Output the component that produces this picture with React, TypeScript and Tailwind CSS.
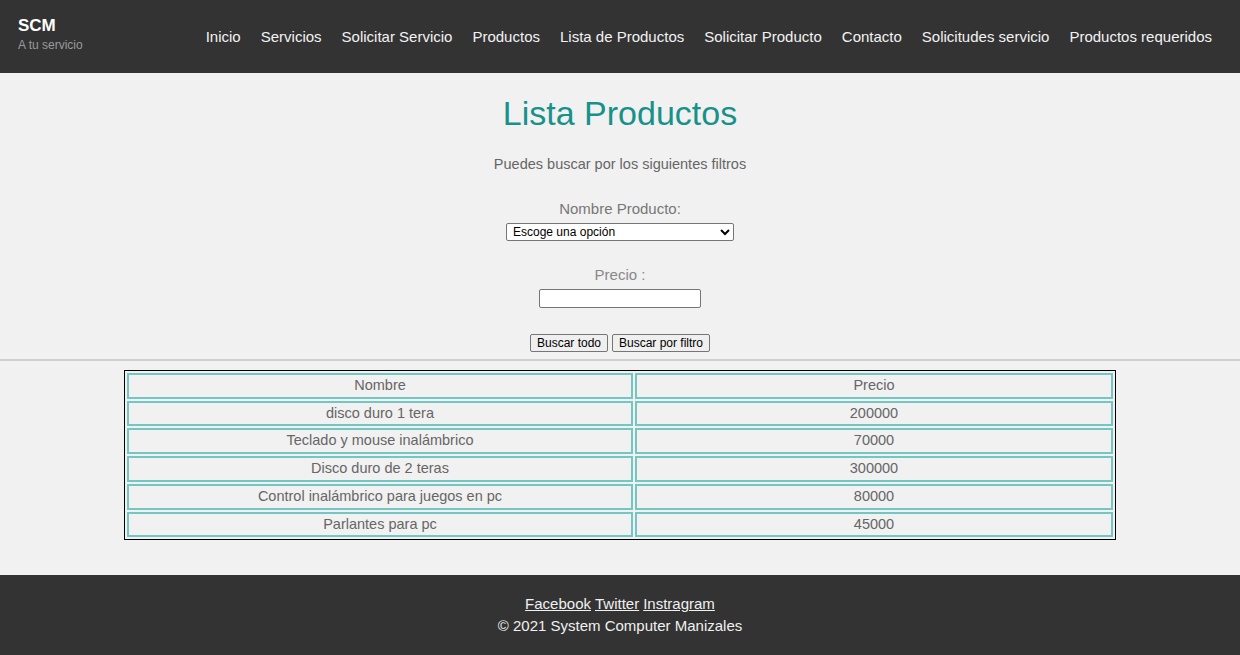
import React from 'react'

const navItems = [
  'Inicio',
  'Servicios',
  'Solicitar Servicio',
  'Productos',
  'Lista de Productos',
  'Solicitar Producto',
  'Contacto',
  'Solicitudes servicio',
  'Productos requeridos',
]

const productos = [
  { nombre: 'disco duro 1 tera', precio: '200000' },
  { nombre: 'Teclado y mouse inalámbrico', precio: '70000' },
  { nombre: 'Disco duro de 2 teras', precio: '300000' },
  { nombre: 'Control inalámbrico para juegos en pc', precio: '80000' },
  { nombre: 'Parlantes para pc', precio: '45000' },
]

function Header() {
  return (
    <header className="flex h-[73px] items-center justify-between bg-[#333333] pl-[18px] pr-[28px]">
      {/* Logo */}
      <div className="flex flex-col pb-[4px]">
        <span className="text-[17px] font-bold leading-[20px] text-white">SCM</span>
        <span className="text-[12px] leading-[18px] text-[#9a9a9a]">A tu servicio</span>
      </div>

      {/* Navigation */}
      <nav className="flex items-center gap-[20px] pt-[2px]">
        {navItems.map((item, index) => (
          <a key={index} href="#" className="text-[15px] text-[#f2f2f2]">
            {item}
          </a>
        ))}
      </nav>
    </header>
  )
}

function Filtros() {
  return (
    <section className="flex flex-col items-center">
      <h1 className="mt-[20px] text-[34px] leading-[40px] text-[#17918a]">Lista Productos</h1>
      <p className="mt-[21px] text-[14.5px] text-[#666666]">Puedes buscar por los siguientes filtros</p>

      <label className="mt-[24px] text-[15px] leading-[18px] text-[#777777]">Nombre Producto:</label>
      <select className="mt-[5px] h-[18px] w-[228px] rounded-[2px] border border-[#767676] bg-white px-[2px] text-[12px] leading-[14px] text-black">
        <option>Escoge una opción</option>
      </select>

      <label className="mt-[25px] text-[15px] leading-[18px] text-[#888888]">Precio :</label>
      <input
        type="text"
        className="mt-[5px] h-[19px] w-[162px] rounded-[2px] border border-[#767676] bg-white"
      />

      <div className="mt-[26px] flex gap-[4px]">
        <button className="h-[18px] rounded-[2px] border border-[#767676] bg-[#efefef] px-[6px] text-[12px] leading-[14px] text-black">
          Buscar todo
        </button>
        <button className="h-[18px] rounded-[2px] border border-[#767676] bg-[#efefef] px-[6px] text-[12px] leading-[14px] text-black">
          Buscar por filtro
        </button>
      </div>
    </section>
  )
}

function Tabla() {
  return (
    <table className="mx-auto mt-[9px] w-[992px] border-separate border-spacing-[2px] border border-black text-[14.5px] text-[#666666]">
      <thead>
        <tr>
          <th className="h-[25.5px] w-[506px] border-2 border-[#74c6c3] p-0 font-normal">Nombre</th>
          <th className="h-[25.5px] border-2 border-[#74c6c3] p-0 font-normal">Precio</th>
        </tr>
      </thead>
      <tbody>
        {productos.map((p, index) => (
          <tr key={index}>
            <td className="h-[25.5px] border-2 border-[#74c6c3] p-0 text-center">{p.nombre}</td>
            <td className="h-[25.5px] border-2 border-[#74c6c3] p-0 text-center">{p.precio}</td>
          </tr>
        ))}
      </tbody>
    </table>
  )
}

function Footer() {
  return (
    <footer className="flex h-[80px] flex-col items-center justify-center bg-[#333333] text-[15px] leading-[22px] text-[#f0f0f0]">
      <div className="flex gap-[4px]">
        <a href="#" className="underline">Facebook</a>
        <a href="#" className="underline">Twitter</a>
        <a href="#" className="underline">Instragram</a>
      </div>
      <p>© 2021 System Computer Manizales</p>
    </footer>
  )
}

export default function App() {
  return (
    <div className="flex min-h-[655px] flex-col bg-[#f1f1f1] font-['Liberation_Sans',Arial,sans-serif]">
      <Header />
      <main className="flex-1">
        <Filtros />
        <hr className="mt-[7px] border-t-2 border-[#d0d0d0]" />
        <Tabla />
      </main>
      <Footer />
    </div>
  )
}
